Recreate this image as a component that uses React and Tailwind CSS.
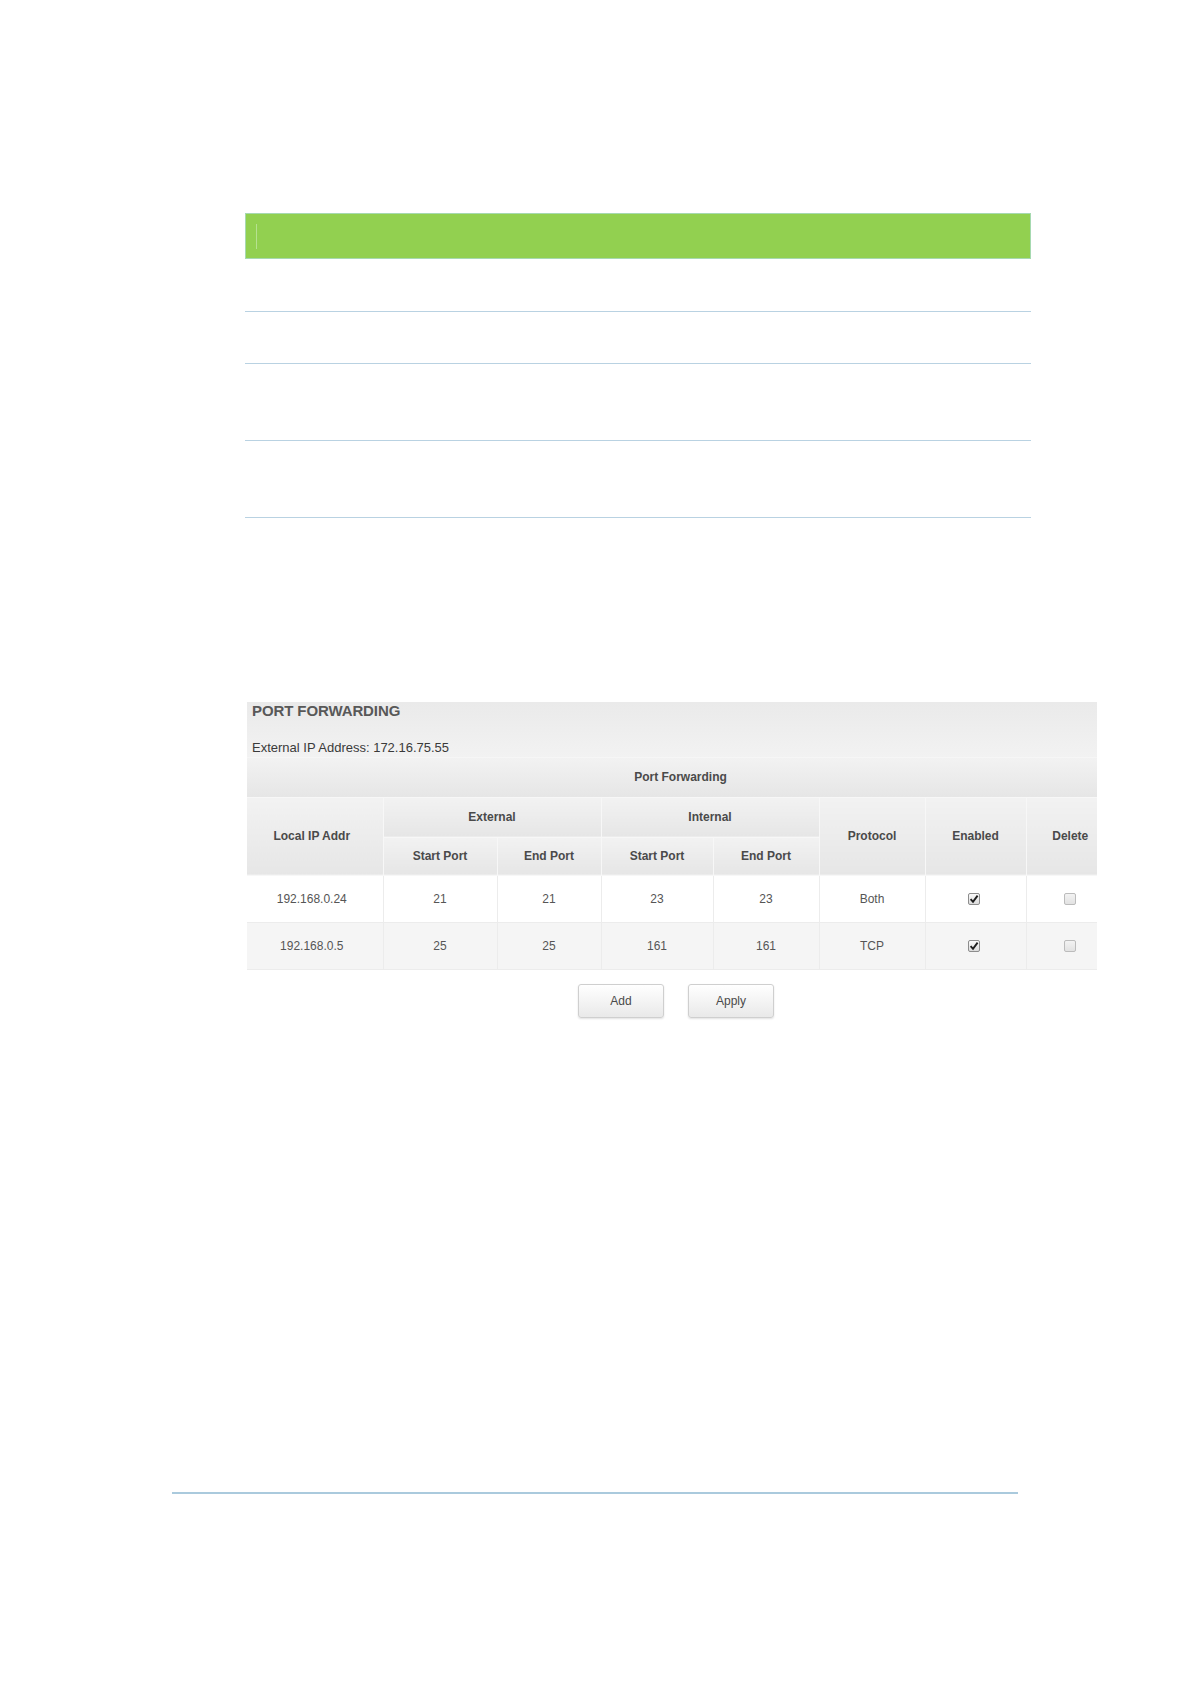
import React from 'react';

const cols = [136, 114, 104, 112, 106, 106, 101, 88];

const rules = [
  { id: 1, h: 'h-[53px]' },
  { id: 2, h: 'h-[52px]' },
  { id: 3, h: 'h-[77px]' },
  { id: 4, h: 'h-[77px]' },
];

const entries = [
  { ip: '192.168.0.24', extStart: 21, extEnd: 21, intStart: 23, intEnd: 23, proto: 'Both', on: true },
  { ip: '192.168.0.5', extStart: 25, extEnd: 25, intStart: 161, intEnd: 161, proto: 'TCP', on: true },
];

const Box = ({ checked }) => {
  if (checked) {
    return (
      <span className="inline-flex items-center justify-center w-[12px] h-[12px] border border-[#8d8d8d] rounded-[2px] bg-linear-to-b from-[#fafafa] to-[#dcdcdc] align-middle">
        <svg width="10" height="10" viewBox="0 0 10 10">
          <path d="M1.6 5.2 L4 7.8 L8.6 1.6" fill="none" stroke="#1e1e1e" strokeWidth="1.9" />
        </svg>
      </span>
    );
  }
  return (
    <span className="inline-block w-[12px] h-[12px] border border-[#bcbcbc] rounded-[2px] bg-linear-to-b from-[#f3f3f3] to-[#e2e2e2] align-middle" />
  );
};

const Th = ({ children, className = '', ...rest }) => (
  <th
    {...rest}
    className={`font-bold text-[12px] text-[#4a4a4a] text-center border-r border-b border-[#f7f7f7] bg-linear-to-b from-[#f2f2f2] to-[#e6e6e6] ${className}`}
  >
    {children}
  </th>
);

const Btn = ({ label }) => (
  <button className="w-[86px] h-[34px] rounded-[3px] border border-[#cfcfcf] bg-linear-to-b from-[#ffffff] to-[#e9e9e9] shadow-[0_1px_2px_rgba(0,0,0,0.12)] text-[12px] text-[#4a4a4a]">
    {label}
  </button>
);

export default function App() {
  return (
    <div className="min-h-[1684px] bg-white font-['Liberation_Sans',Arial,sans-serif]">
      <div className="ml-[245px] w-[786px] pt-[213px]">
        <div className="h-[46px] bg-[#92d050] border border-[#a6d9b0] flex items-center pl-[10px]">
          <div className="w-px h-[25px] bg-[#b6e190]" />
        </div>
        {rules.map((r) => (
          <div key={r.id} className={`${r.h} border-b border-[#b9d2e2]`} />
        ))}
      </div>

      <div className="ml-[247px] w-[850px] mt-[184px] overflow-hidden">
        <div className="h-[56px] flex flex-col pl-[5px] bg-linear-to-b from-[#eaeaea] to-[#f2f2f2] border-b border-[#f6f6f6]">
          <div className="text-[15px] leading-[18px] font-bold text-[#585858] tracking-[-0.1px]">PORT FORWARDING</div>
          <div className="mt-[20px] text-[13px] leading-[16px] text-[#3a3a3a]">External IP Address: 172.16.75.55</div>
        </div>

        <table className="table-fixed border-collapse w-[867px]">
          <colgroup>
            {cols.map((w, i) => (
              <col key={i} style={{ width: w }} />
            ))}
          </colgroup>
          <thead>
            <tr className="h-[39px]">
              <Th colSpan={8} className="border-r-0">Port Forwarding</Th>
            </tr>
            <tr className="h-[40px]">
              <Th rowSpan={2} className="pr-[6px]">Local IP Addr</Th>
              <Th colSpan={2}>External</Th>
              <Th colSpan={2}>Internal</Th>
              <Th rowSpan={2}>Protocol</Th>
              <Th rowSpan={2}>Enabled</Th>
              <Th rowSpan={2} className="border-r-0">Delete</Th>
            </tr>
            <tr className="h-[38px]">
              <Th>Start Port</Th>
              <Th>End Port</Th>
              <Th>Start Port</Th>
              <Th>End Port</Th>
            </tr>
          </thead>
          <tbody>
            {entries.map((e, i) => (
              <tr key={e.ip} className={`h-[47px] text-[12px] text-[#555555] text-center ${i % 2 ? 'bg-[#f5f5f5]' : 'bg-white'}`}>
                <td className="border-r border-b border-[#ececec] pr-[6px]">{e.ip}</td>
                <td className="border-r border-b border-[#ececec]">{e.extStart}</td>
                <td className="border-r border-b border-[#ececec]">{e.extEnd}</td>
                <td className="border-r border-b border-[#ececec]">{e.intStart}</td>
                <td className="border-r border-b border-[#ececec]">{e.intEnd}</td>
                <td className="border-r border-b border-[#ececec]">{e.proto}</td>
                <td className="border-r border-b border-[#ececec] pr-[3px]">
                  <Box checked={e.on} />
                </td>
                <td className="border-b border-[#ececec]">
                  <Box checked={false} />
                </td>
              </tr>
            ))}
          </tbody>
        </table>
      </div>

      <div className="ml-[578px] mt-[14px] flex gap-[24px]">
        <Btn label="Add" />
        <Btn label="Apply" />
      </div>

      <div className="ml-[172px] w-[846px] mt-[474px] h-[2px] bg-[#aacadd]" />
    </div>
  );
}
